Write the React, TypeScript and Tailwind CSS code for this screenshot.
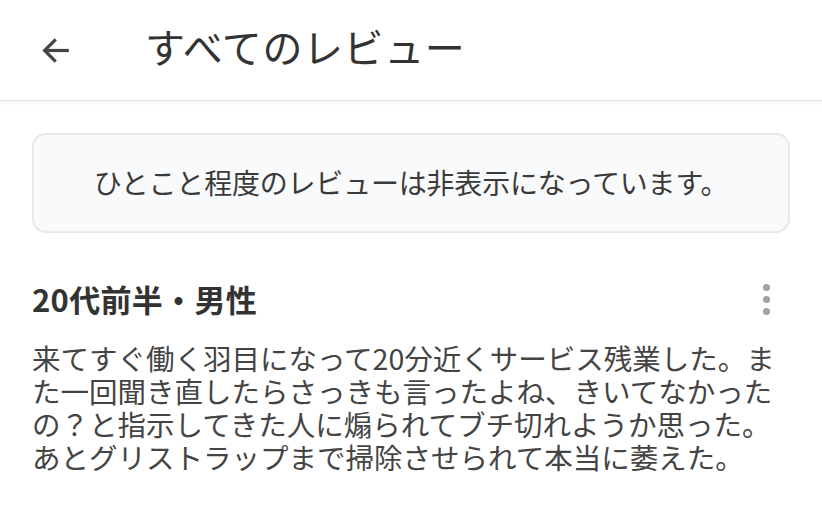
import React from "react";

export default function App() {
  const font = { fontFamily: '"Noto Sans CJK JP", "Noto Sans", sans-serif' };
  return (
    <div className="w-[822px] h-[521px] bg-white overflow-hidden" style={font}>
      <header className="h-[101px] flex items-center border-b border-[#e6e6e6] shadow-[0_2px_4px_rgba(0,0,0,0.06)]">
        <div className="w-[145px] flex items-center pl-[38px]">
          <svg width="37" height="37" viewBox="0 0 24 24" fill="none" stroke="#444" strokeWidth="2.1" strokeLinecap="butt">
            <path d="M20 12H4.5" />
            <path d="M11.5 4.8L4.3 12l7.2 7.2" />
          </svg>
        </div>
        <h1 className="text-[40px] leading-none text-[#333] pb-[8px] tracking-[0.6px]">すべてのレビュー</h1>
      </header>
      <main className="px-[32px] pt-[32px]">
        <div className="h-[100px] rounded-[14px] border-2 border-[#e9e9ea] bg-[#f9fafc] flex items-center justify-center">
          <p className="text-[28px] text-[#3a3a3a] tracking-[-0.2px] pb-[2px]">ひとこと程度のレビューは非表示になっています。</p>
        </div>
        <div className="mt-[46px] flex items-center justify-between">
          <h2 className="text-[31px] font-bold text-[#333] leading-[40px] tracking-[0.3px]">20代前半・男性</h2>
          <div className="flex flex-col gap-[5px] items-center pr-[20px]">
            <span className="w-[7px] h-[7px] rounded-full bg-[#a0a0a0]" />
            <span className="w-[7px] h-[7px] rounded-full bg-[#a0a0a0]" />
            <span className="w-[7px] h-[7px] rounded-full bg-[#a0a0a0]" />
          </div>
        </div>
        <p className="mt-[22px] text-[28.5px] leading-[33px] text-[#444] whitespace-nowrap">
          <span className="block">来てすぐ働く羽目になって20分近くサービス残業した。ま</span>
          <span className="block">た一回聞き直したらさっきも言ったよね、きいてなかった</span>
          <span className="block">の？と指示してきた人に煽られてブチ切れようか思った。</span>
          <span className="block">あとグリストラップまで掃除させられて本当に萎えた。</span>
        </p>
      </main>
    </div>
  );
}
